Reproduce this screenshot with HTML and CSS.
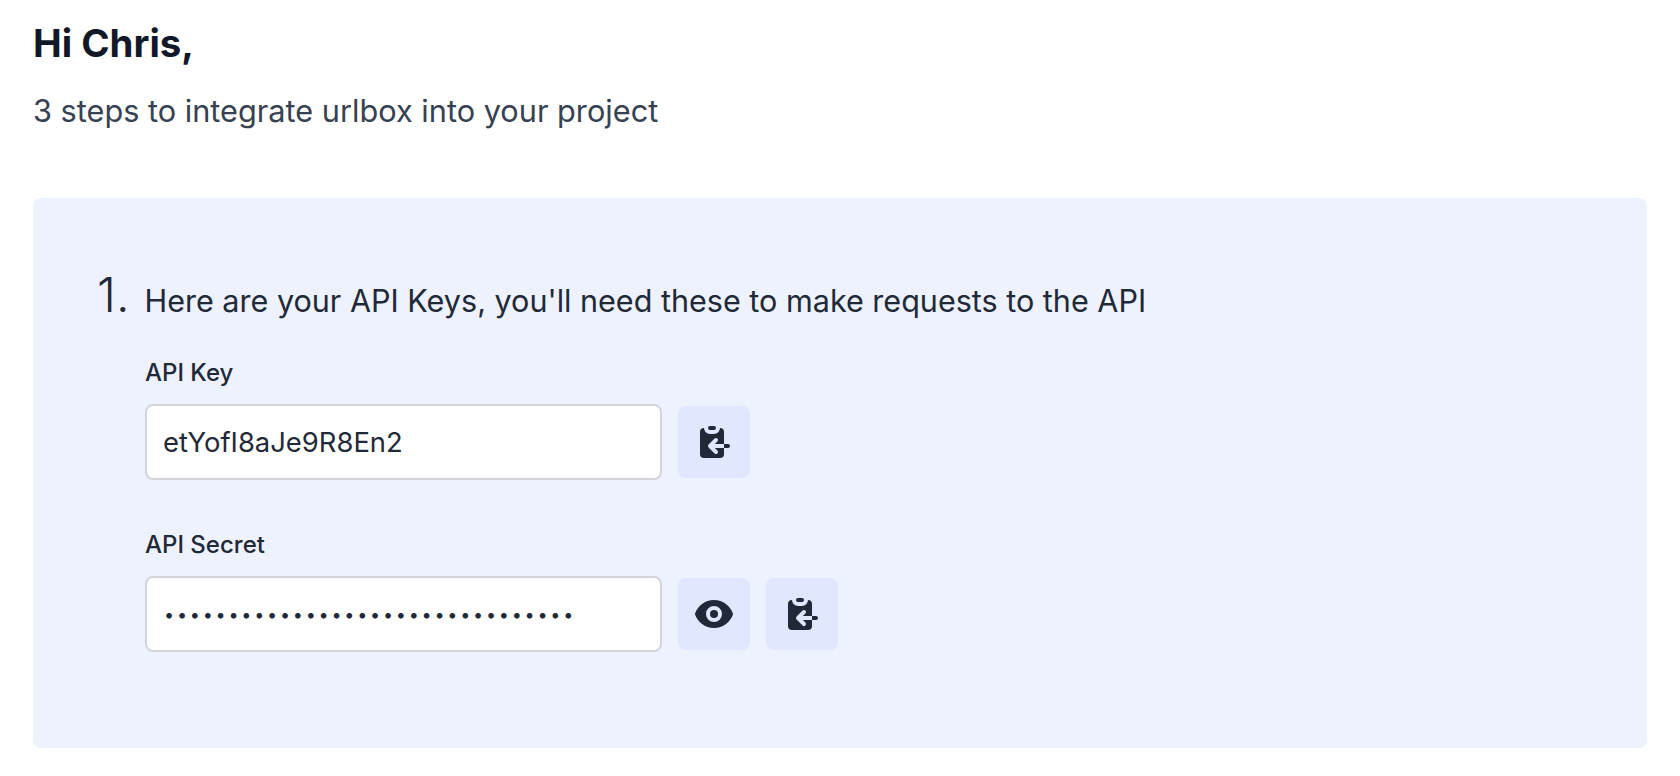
FILE: index.html
```html
<!DOCTYPE html>
<html lang="en">
<head>
<meta charset="utf-8">
<title>Getting started</title>
<link rel="stylesheet" href="styles.css">
</head>
<body>
<main class="page">
  <h1 class="title">Hi Chris,</h1>
  <p class="subtitle">3 steps to integrate urlbox into your project</p>
  <section class="panel">
    <div class="step-head">
      <span class="step-num">1.</span>
      <span class="step-text">Here are your API Keys, you'll need these to make requests to the API</span>
    </div>
    <div class="fields">
      <div class="field">
        <label class="label">API Key</label>
        <div class="row">
          <div class="input">etYofI8aJe9R8En2</div>
          <button class="icon-btn" type="button" aria-label="Copy">
            <svg viewBox="0 0 20 20" class="icon"><path d="M8 2a1 1 0 000 2h2a1 1 0 100-2H8z"/><path d="M3 5a2 2 0 012-2 3 3 0 003 3h2a3 3 0 003-3 2 2 0 012 2v6h-4.586l1.293-1.293a1 1 0 00-1.414-1.414l-3 3a1 1 0 000 1.414l3 3a1 1 0 001.414-1.414L10.414 13H15v3a2 2 0 01-2 2H5a2 2 0 01-2-2V5zM15 11h2a1 1 0 110 2h-2v-2z"/></svg>
          </button>
        </div>
      </div>
      <div class="field">
        <label class="label">API Secret</label>
        <div class="row">
          <div class="input input-secret">••••••••••••••••••••••••••••••••</div>
          <button class="icon-btn" type="button" aria-label="Show">
            <svg viewBox="0 0 20 20" class="icon"><path d="M10 12a2 2 0 100-4 2 2 0 000 4z"/><path fill-rule="evenodd" clip-rule="evenodd" d="M.458 10C1.732 5.943 5.522 3 10 3s8.268 2.943 9.542 7c-1.274 4.057-5.064 7-9.542 7S1.732 14.057.458 10zM14 10a4 4 0 11-8 0 4 4 0 018 0z"/></svg>
          </button>
          <button class="icon-btn" type="button" aria-label="Copy">
            <svg viewBox="0 0 20 20" class="icon"><path d="M8 2a1 1 0 000 2h2a1 1 0 100-2H8z"/><path d="M3 5a2 2 0 012-2 3 3 0 003 3h2a3 3 0 003-3 2 2 0 012 2v6h-4.586l1.293-1.293a1 1 0 00-1.414-1.414l-3 3a1 1 0 000 1.414l3 3a1 1 0 001.414-1.414L10.414 13H15v3a2 2 0 01-2 2H5a2 2 0 01-2-2V5zM15 11h2a1 1 0 110 2h-2v-2z"/></svg>
          </button>
        </div>
      </div>
    </div>
  </section>
</main>
</body>
</html>
```

FILE: styles.css
```css
* { box-sizing: border-box; }
html, body { margin: 0; padding: 0; background: #fff; }
body { font-family: Inter, "Liberation Sans", sans-serif; color: #1f2937; }
.page { padding: 16px 33px 0 33px; }
.title { margin: 0; font-size: 38.4px; line-height: 54px; font-weight: 700; color: #111827; }
.subtitle { margin: 21px 0 0; font-size: 30.7px; line-height: 40px; font-weight: 400; color: #374151; }
.panel { margin-top: 67px; height: 550px; background: #eef2ff; border-radius: 8px; padding: 67px 64px 0; }
.step-head { display: flex; align-items: baseline; gap: 15px; }
.step-num { font-size: 48px; line-height: 60px; font-weight: 300; color: #1f2937; }
.step-text { font-size: 30.55px; line-height: 40px; color: #1f2937; }
.fields { padding-left: 48px; margin-top: 32px; display: flex; flex-direction: column; gap: 49px; }
.label { display: block; font-size: 24px; line-height: 32px; font-weight: 500; color: #1f2937; margin-bottom: 15px; }
.row { display: flex; align-items: center; gap: 16px; }
.input { width: 517px; height: 76px; background: #fff; border: 2px solid #d1d5db; border-radius: 8px; padding: 0 16px; font-size: 27.4px; line-height: 72px; color: #1f2937; }
.input-secret { padding-left: 17px; font-size: 18px; letter-spacing: 2.75px; line-height: 74px; }
.icon-btn { width: 72px; height: 72px; padding: 16px; border: 0; border-radius: 8px; background: #e0e7ff; display: flex; }
.icon { width: 40px; height: 40px; fill: #1f2937; display: block; }
```
